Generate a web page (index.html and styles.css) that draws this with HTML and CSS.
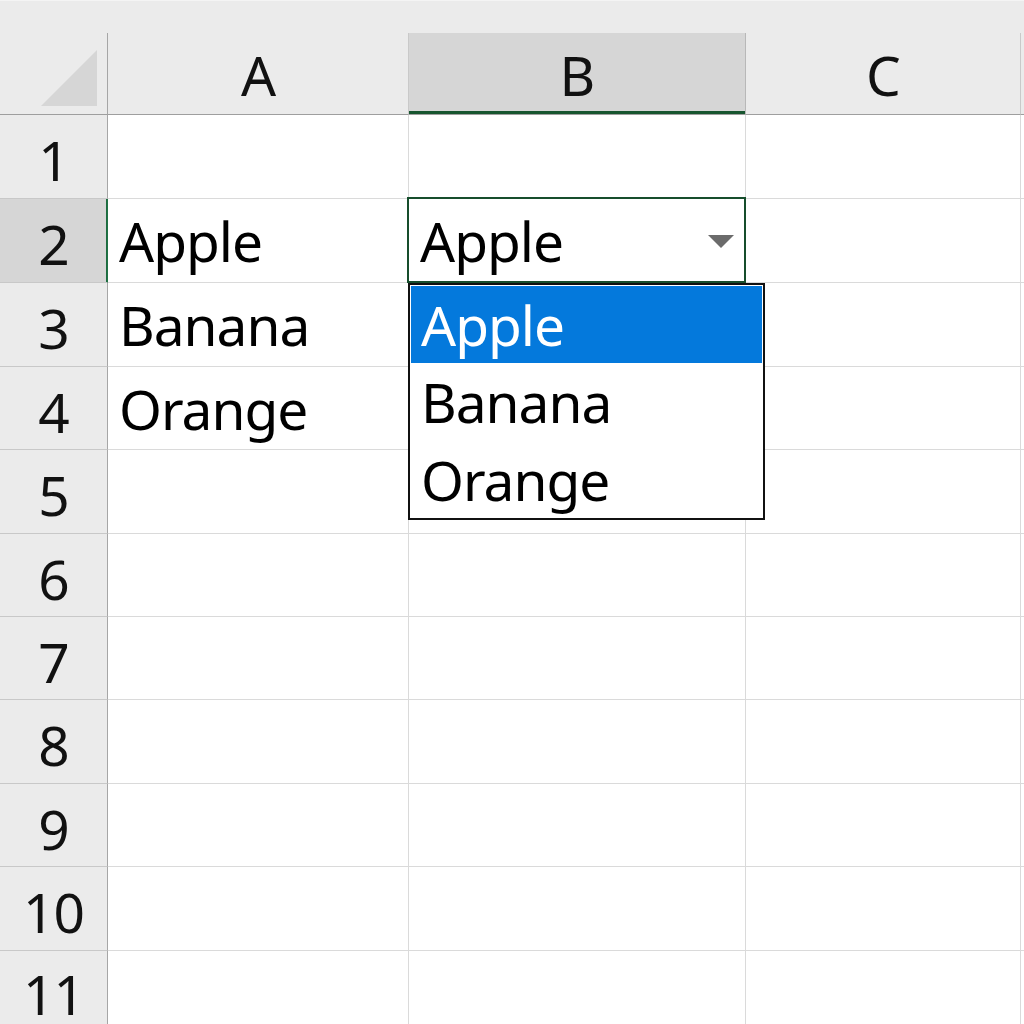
FILE: index.html
```html
<!DOCTYPE html>
<html lang="en">
<head>
<meta charset="utf-8">
<title>Sheet with dropdown</title>
<link rel="stylesheet" href="styles.css">
</head>
<body>
<div class="sheet">
  <div class="topstrip"></div>

  <div class="hdr corner">
    <svg class="corner-tri" width="107" height="80" viewBox="0 0 107 80"><polygon points="41,73 97,73 97,17" fill="#d6d6d6"/></svg>
  </div>
  <div class="hdr col">A</div>
  <div class="hdr col col-sel">B</div>
  <div class="hdr col">C</div>
  <div class="hdr col last"></div>

  <div class="rh">1</div><div class="c"></div><div class="c"></div><div class="c"></div><div class="c last"></div>

  <div class="rh rh-sel">2</div>
  <div class="c">Apple</div>
  <div class="c active">Apple
    <svg class="arrow" width="26" height="13" viewBox="0 0 26 13"><polygon points="0,0 26,0 13,13" fill="#6b6b6b"/></svg>
    <div class="list">
      <div class="item item-sel">Apple</div>
      <div class="item">Banana</div>
      <div class="item">Orange</div>
    </div>
  </div>
  <div class="c"></div><div class="c last"></div>

  <div class="rh">3</div><div class="c">Banana</div><div class="c"></div><div class="c"></div><div class="c last"></div>
  <div class="rh">4</div><div class="c">Orange</div><div class="c"></div><div class="c"></div><div class="c last"></div>
  <div class="rh">5</div><div class="c"></div><div class="c"></div><div class="c"></div><div class="c last"></div>
  <div class="rh">6</div><div class="c"></div><div class="c"></div><div class="c"></div><div class="c last"></div>
  <div class="rh">7</div><div class="c"></div><div class="c"></div><div class="c"></div><div class="c last"></div>
  <div class="rh">8</div><div class="c"></div><div class="c"></div><div class="c"></div><div class="c last"></div>
  <div class="rh">9</div><div class="c"></div><div class="c"></div><div class="c"></div><div class="c last"></div>
  <div class="rh">10</div><div class="c"></div><div class="c"></div><div class="c"></div><div class="c last"></div>
  <div class="rh rh-lastrow">11</div><div class="c"></div><div class="c"></div><div class="c"></div><div class="c last"></div>
</div>
</body>
</html>
```

FILE: styles.css
```css
html, body {
  margin: 0;
  padding: 0;
  background: #ffffff;
}

body {
  width: 1024px;
  height: 1024px;
  overflow: hidden;
  font-family: "Noto Sans", "Open Sans", "DejaVu Sans", sans-serif;
  color: #000;
}

.sheet {
  display: grid;
  grid-template-columns: 108px 301px 337px 275px 1fr;
  grid-template-rows: 33px 82px 84px 84px 84px 83px 84px 83px 83px 84px 83px 84px 74px;
  width: 1024px;
  height: 1024px;
}

.topstrip {
  grid-column: 1 / -1;
  background: #ebebeb;
  border-top: 1px solid #f4f4f4;
  box-sizing: border-box;
}

.hdr {
  box-sizing: border-box;
  background: #ebebeb;
  border-right: 1px solid #c9c9c9;
  border-bottom: 1px solid #9e9e9e;
  font-size: 55px;
  line-height: 80px;
  letter-spacing: -1px;
  text-align: center;
  color: #111;
}

.hdr.corner {
  border-right-color: #a6a6a6;
}

.corner-tri {
  display: block;
}

.hdr.col {
  padding-top: 2px;
}

.hdr.last {
  border-right: none;
}

.hdr.col-sel {
  background: #d6d6d6;
  border-right-color: #b8b8b8;
  box-shadow: inset 0 -3px 0 #17552f;
}

.rh {
  box-sizing: border-box;
  background: #ebebeb;
  border-right: 1px solid #a6a6a6;
  border-bottom: 1px solid #c8c8c8;
  font-size: 55px;
  line-height: 83px;
  letter-spacing: -1px;
  padding-top: 3px;
  text-align: center;
  color: #111;
}

.rh.rh-lastrow {
  line-height: 59px;
  padding-top: 13px;
  border-bottom: none;
}

.rh-sel {
  background: #d6d6d6;
  border-right: 1px solid #217346;
  box-shadow: inset -1px 0 0 #1d6b3f;
}

.c {
  box-sizing: border-box;
  border-right: 1px solid #dadada;
  border-bottom: 1px solid #dadada;
  font-size: 55px;
  line-height: 83px;
  letter-spacing: -1px;
  padding-left: 11px;
  white-space: nowrap;
}

.c.last {
  border-right: none;
}

.c.active {
  position: relative;
  z-index: 2;
}

.c.active::after {
  content: "";
  position: absolute;
  left: -2px;
  top: -2px;
  right: -1px;
  bottom: -1px;
  border: 2px solid #164e2c;
  pointer-events: none;
}

.arrow {
  position: absolute;
  left: 299px;
  top: 36px;
}

.list {
  position: absolute;
  left: -1px;
  top: 84px;
  width: 357px;
  height: 237px;
  box-sizing: border-box;
  border: 2px solid #111;
  background: #fff;
  padding: 1px;
  z-index: 3;
  letter-spacing: -1px;
}

.item {
  height: 78px;
  line-height: 78px;
  padding-left: 10px;
  font-size: 55px;
  color: #000;
}

.item-sel {
  background: #0479dc;
  color: #fff;
  height: 77px;
  line-height: 77px;
}
```
